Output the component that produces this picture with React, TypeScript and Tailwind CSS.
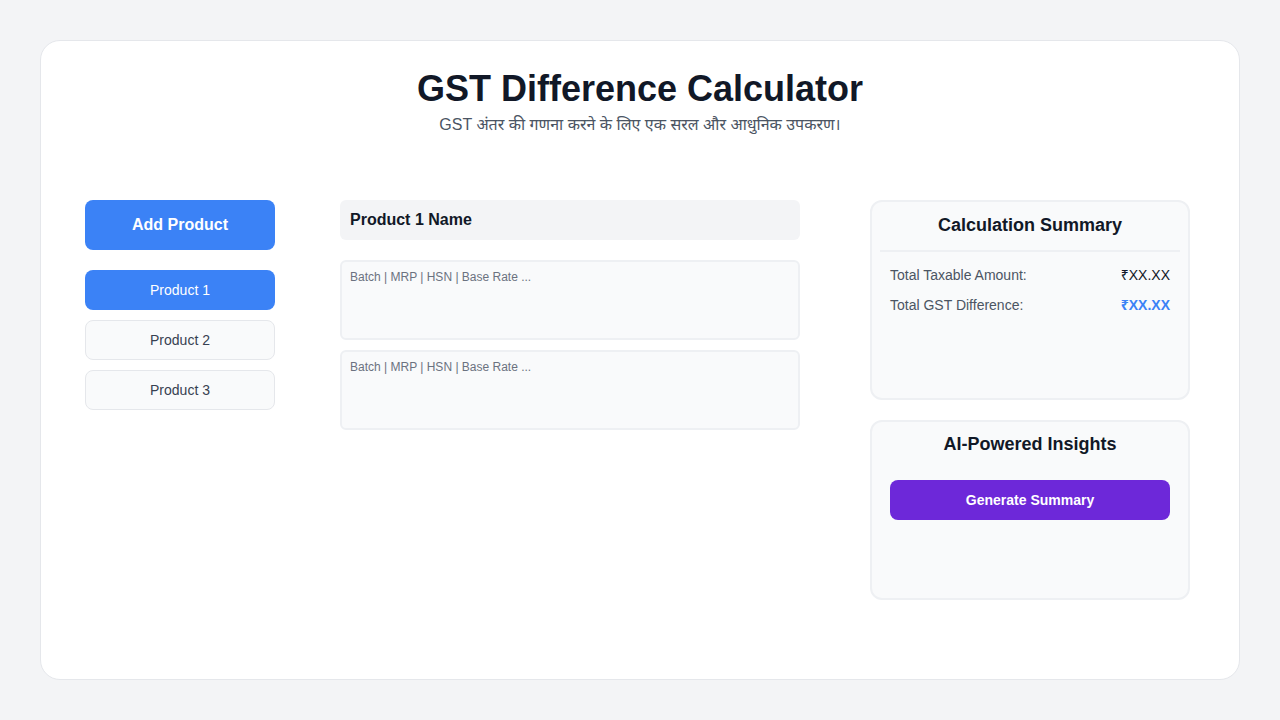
const products = ['Product 1', 'Product 2', 'Product 3']

export default function App() {
  return (
    <div
      className="min-h-screen bg-[#f3f4f6] p-10"
      style={{ fontFamily: '"Liberation Sans", Arial, "Noto Sans", sans-serif' }}
    >
      <div className="h-[640px] rounded-[20px] border border-[#e5e7eb] bg-white pt-[28px]">
        {/* Header */}
        <div className="text-center">
          <h1 className="text-4xl font-bold text-[#111827]">GST Difference Calculator</h1>
          <p className="mt-1 text-base text-[#4b5563]">
            GST अंतर की गणना करने के लिए एक सरल और आधुनिक उपकरण।
          </p>
        </div>

        <div className="mt-[63px] flex pl-[44px]">
          {/* Product list */}
          <div className="flex w-[190px] flex-col">
            <button className="h-[50px] rounded-lg bg-[#3b82f6] text-base font-bold text-white">
              Add Product
            </button>
            <div className="mt-5 flex flex-col gap-[10px]">
              {products.map((p, i) => (
                <button
                  key={p}
                  className={`h-10 rounded-lg text-sm ${
                    i === 0
                      ? 'bg-[#3b82f6] text-white'
                      : 'border border-[#e5e7eb] bg-[#f9fafb] text-[#374151]'
                  }`}
                >
                  {p}
                </button>
              ))}
            </div>
          </div>

          {/* Product details */}
          <div className="ml-[65px] w-[460px]">
            <div className="flex h-10 items-center rounded-md bg-[#f3f4f6] px-[10px] text-base font-bold text-[#111827]">
              Product 1 Name
            </div>
            <div className="mt-5 flex flex-col gap-[10px]">
              {[1, 2].map((i) => (
                <textarea
                  key={i}
                  placeholder="Batch | MRP | HSN | Base Rate ..."
                  className="h-20 resize-none rounded-md border-2 border-[#eef0f3] bg-[#f9fafb] px-2 py-[7px] text-xs text-[#111827] outline-none placeholder:text-[#6b7280]"
                />
              ))}
            </div>
          </div>

          {/* Right column */}
          <div className="ml-[70px] flex w-[320px] flex-col gap-5">
            <div className="h-[200px] rounded-xl border-2 border-[#eef0f3] bg-[#f9fafb] px-[8px]">
              <h2 className="pt-[9px] pb-[11px] text-center text-lg font-bold text-[#111827]">
                Calculation Summary
              </h2>
              <div className="border-t-2 border-[#eef0f3] px-[10px] pt-[13px] text-sm">
                <div className="flex justify-between">
                  <span className="text-[#4b5563]">Total Taxable Amount:</span>
                  <span className="text-[#111827]">₹XX.XX</span>
                </div>
                <div className="mt-[10px] flex justify-between">
                  <span className="text-[#4b5563]">Total GST Difference:</span>
                  <span className="font-bold text-[#3b82f6]">₹XX.XX</span>
                </div>
              </div>
            </div>

            <div className="h-[180px] rounded-xl border-2 border-[#eef0f3] bg-[#f9fafb] px-[18px]">
              <h2 className="pt-[8px] text-center text-lg font-bold text-[#111827]">
                AI-Powered Insights
              </h2>
              <button className="mt-[22px] h-10 w-full rounded-lg bg-[#6d28d9] text-sm font-bold text-white">
                Generate Summary
              </button>
            </div>
          </div>
        </div>
      </div>
    </div>
  )
}
